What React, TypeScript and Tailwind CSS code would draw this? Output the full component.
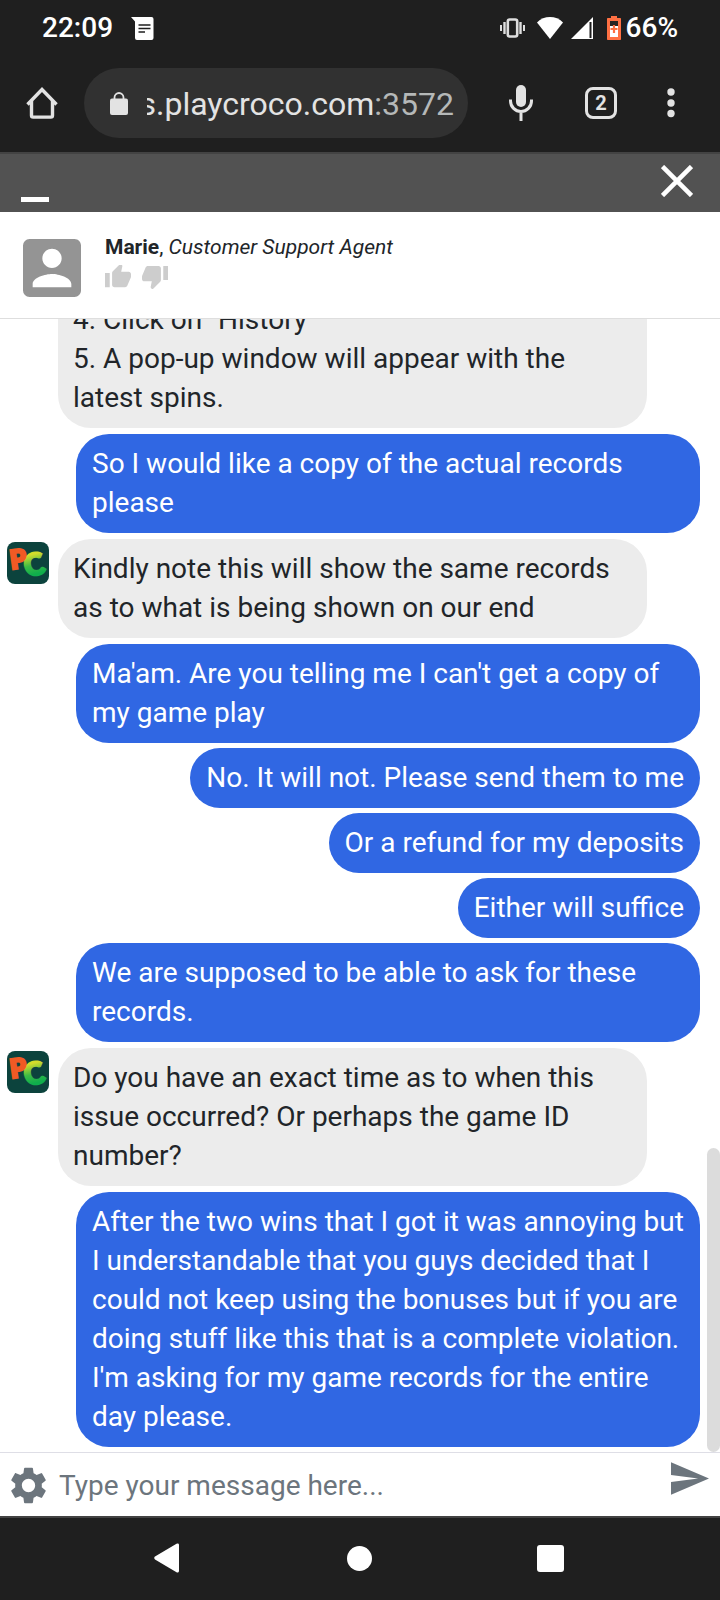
import { useState } from "react";
import clsx from "clsx";

interface Message { from: "agent" | "user"; text: string; avatar?: boolean; clipped?: boolean; }

const messages: Message[] = [
  { from: "agent", text: "4. Click on \"History\"\n5. A pop-up window will appear with the latest spins.", clipped: true },
  { from: "user", text: "So I would like a copy of the actual records please" },
  { from: "agent", text: "Kindly note this will show the same records as to what is being shown on our end", avatar: true },
  { from: "user", text: "Ma'am. Are you telling me I can't get a copy of my game play" },
  { from: "user", text: "No. It will not. Please send them to me" },
  { from: "user", text: "Or a refund for my deposits" },
  { from: "user", text: "Either will suffice" },
  { from: "user", text: "We are supposed to be able to ask for these records." },
  { from: "agent", text: "Do you have an exact time as to when this issue occurred? Or perhaps the game ID number?", avatar: true },
  { from: "user", text: "After the two wins that I got it was annoying but I understandable that you guys decided that I could not keep using the bonuses but if you are doing stuff like this that is a complete violation. I'm asking for my game records for the entire day please." },
];

function StatusBar() {
  return (
    <div className="flex h-14 items-center justify-between px-[42px] text-[28px] leading-8 font-medium text-white">
      <div className="flex items-center gap-[18px]">
        <span>22:09</span>
        <svg width="23" height="23" viewBox="0 0 23 23">
          <path d="M0 0h20.500a2 2 0 0 1 2 2v19a2 2 0 0 1-2 2H6a2 2 0 0 1-2-2V4.500z" fill="#fff" />
          <path d="M7.500 8h12M7.500 11.500h12M7.500 15h6.500" stroke="#1f1f1f" strokeWidth="1.600" />
        </svg>
      </div>
      <div className="flex items-center">
        <svg className="mr-3" width="25" height="20" viewBox="0 0 25 20" fill="none" stroke="#dedede">
          <rect x="7.800" y="1.500" width="9.400" height="17" rx="2" strokeWidth="2.600" />
          <path d="M1 7v6M24 7v6" strokeWidth="2" />
          <path d="M4.500 4v12M20.500 4v12" strokeWidth="2.400" />
        </svg>
        <svg className="mr-2" width="26" height="22" viewBox="0 0 26 22">
          <path d="M0 5.500C7-1.800 19-1.800 26 5.500L13 22z" fill="#fff" />
        </svg>
        <svg className="mr-[14px]" width="22" height="22" viewBox="0 0 22 22">
          <path d="M22 0v22H0z" fill="#fff" />
          <path d="M19.500 5v16" stroke="#1f1f1f" strokeWidth="2" />
        </svg>
        <svg className="mr-[5px]" width="14" height="24" viewBox="0 0 14 24">
          <path d="M4 0h6v2h3.200a.8.8 0 0 1 .8.8v20.400a.8.8 0 0 1-.8.800H.8a.8.8 0 0 1-.8-.8V2.800A.8.8 0 0 1 .8 2H4z" fill="#ff7043" />
          <path d="M3 5h8v5H3z" fill="#2a2422" />
          <path d="M3 10h8v11H3z" fill="#fff" />
          <path d="M7 9v8M3.500 13h7" stroke="#ff7043" strokeWidth="2.200" />
        </svg>
        <span>66%</span>
      </div>
    </div>
  );
}

function BrowserBar() {
  return (
    <div className="flex items-center pt-3 pr-[45px] pb-[14px] pl-[26px]">
      <button aria-label="Home" className="mr-[26px] shrink-0">
        <svg width="32" height="32" viewBox="0 0 32 32" fill="none" stroke="#e3e3e3" strokeWidth="3.400">
          <path d="M1.500 17.500 16 2.500l14.500 15" />
          <path d="M5.500 14v14.500a1.600 1.600 0 0 0 1.600 1.600h17.800a1.600 1.600 0 0 0 1.600-1.600V14" />
        </svg>
      </button>
      <button className="flex h-[70px] min-w-0 flex-1 items-center rounded-full bg-[#313131] pr-[14px] pl-[26px]">
        <svg className="mr-[19px] shrink-0" width="18" height="23" viewBox="0 0 18 23">
          <rect y="6.500" width="18" height="16.500" rx="2" fill="#e3e3e3" />
          <path d="M4.500 8V5.500a4.500 4.500 0 0 1 9 0V8" fill="none" stroke="#e3e3e3" strokeWidth="1.800" />
        </svg>
        <span className="flex min-w-0 flex-1 justify-end overflow-hidden pt-px text-[32px] leading-10 whitespace-nowrap text-[#e3e3e3]">
          s.playcroco.com<span className="text-[#b5b8b8]">:3572</span>
        </span>
      </button>
      <button aria-label="Voice search" className="ml-[41px] shrink-0">
        <svg width="24" height="36" viewBox="0 0 24 36">
          <rect x="7" width="10" height="22" rx="5" fill="#e3e3e3" />
          <path d="M1.500 14.500v1.500a10.500 10.500 0 0 0 21 0v-1.500M12 27v9" fill="none" stroke="#e3e3e3" strokeWidth="3" />
        </svg>
      </button>
      <button className="ml-[52px] flex size-8 shrink-0 items-center justify-center rounded-lg border-3 border-[#e3e3e3] text-xl leading-6 font-bold text-[#e3e3e3]">
        2
      </button>
      <button aria-label="More options" className="ml-[50px] shrink-0">
        <svg width="8" height="30" viewBox="0 0 8 30" fill="#e3e3e3">
          <circle cx="4" cy="4" r="3.700" />
          <circle cx="4" cy="15" r="3.700" />
          <circle cx="4" cy="25.500" r="3.700" />
        </svg>
      </button>
    </div>
  );
}

function ChatTitleBar() {
  return (
    <div className="flex h-15 items-center justify-between border-t-2 border-[#434343] bg-[#525252] pr-[27px] pb-1 pl-[21px]">
      <button aria-label="Minimize" className="flex h-[42px] items-end">
        <span className="h-[5px] w-7 bg-white" />
      </button>
      <button aria-label="Close">
        <svg width="32" height="32" viewBox="0 0 32 32" stroke="#fff" strokeWidth="4.600">
          <path d="M1.500 1.500l29 29M30.500 1.500l-29 29" />
        </svg>
      </button>
    </div>
  );
}

function AgentHeader() {
  return (
    <div className="flex items-start gap-6 border-b border-[#dedede] bg-white px-[23px] pt-[23px] pb-[21px]">
      <svg className="mt-1 shrink-0" width="58" height="58" viewBox="3 3 18 18" fill="#949494">
        <path d="M3 5v14a2 2 0 0 0 2 2h14c1.100 0 2-.9 2-2V5c0-1.100-.9-2-2-2H5a2 2 0 0 0-2 2zm12 4c0 1.660-1.340 3-3 3s-3-1.340-3-3 1.340-3 3-3 3 1.340 3 3zm-9 8c0-2 4-3.100 6-3.100s6 1.100 6 3.100v1H6v-1z" />
      </svg>
      <div>
        <p className="text-[21px] leading-6 text-[#212529]"><b>Marie</b>, <i>Customer Support Agent</i></p>
        <div className="mt-1.5 flex gap-[11px]">
          <button aria-label="Rate good">
            <svg width="26" height="24" viewBox="1 2.400 22 20" fill="#cdcdcd">
              <path d="M1 21h4V9H1v12zm22-11c0-1.100-.9-2-2-2h-6.310l.95-4.570.03-.32c0-.41-.17-.79-.44-1.060L14.170 1 7.590 7.590C7.220 7.950 7 8.450 7 9v10c0 1.100.9 2 2 2h9c.83 0 1.540-.5 1.840-1.220l3.020-7.050c.09-.23.14-.47.14-.73v-2z" />
            </svg>
          </button>
          <button aria-label="Rate bad">
            <svg width="26" height="24" viewBox="1 2.400 22 20" fill="#cdcdcd">
              <path d="M15 3H6c-.83 0-1.540.5-1.840 1.220l-3.020 7.050c-.09.23-.14.47-.14.73v2c0 1.100.9 2 2 2h6.310l-.95 4.570-.03.32c0 .41.17.79.44 1.060L9.830 23l6.590-6.590c.36-.36.58-.86.58-1.410V5c0-1.100-.9-2-2-2zm4 0v12h4V3h-4z" />
            </svg>
          </button>
        </div>
      </div>
    </div>
  );
}

function CrocoLogo() {
  return (
    <svg width="42" height="42" viewBox="0 0 42 42" role="img" aria-label="PC" fontFamily="Lato, sans-serif" fontWeight="900">
      <defs>
        <linearGradient id="croco" x1="0" y1="0" x2="0" y2="1">
          <stop offset="0.250" stopColor="#d3dc2c" />
          <stop offset="0.550" stopColor="#3dbb45" />
          <stop offset="0.800" stopColor="#0fae4c" />
        </linearGradient>
      </defs>
      <rect width="42" height="42" rx="8" fill="#0c433d" />
      <text x="17" y="33" fontSize="30" fill="url(#croco)" stroke="url(#croco)" strokeWidth="2.500" transform="rotate(-14 28 22)">C</text>
      <text x="3" y="26" fontSize="26" fill="#f15a24" stroke="#f15a24" strokeWidth="2.500" transform="rotate(-8 12 18)">P</text>
    </svg>
  );
}

function MessageRow({ message }: { message: Message }) {
  if (message.from === "user") {
    return (
      <li className="mt-[5px] flex justify-end pr-5 pl-[76px]">
        <p className="rounded-[33px] bg-[#3067e3] px-4 pt-[10px] pb-[11px] text-white">{message.text}</p>
      </li>
    );
  }
  return (
    <li className="mt-[6px] mb-[6px] flex items-start gap-[9px] pr-[73px] pl-[7px]">
      <div className="mt-[3px] w-[42px] shrink-0">{message.avatar && <CrocoLogo />}</div>
      <p
        className={clsx(
          "flex-1 bg-[#ececec] pt-[10px] pr-4 pb-[11px] pl-[15px] whitespace-pre-line text-[#212529]",
          message.clipped ? "rounded-b-[33px]" : "rounded-[33px]"
        )}
      >
        {message.text}
      </p>
    </li>
  );
}

function Composer() {
  const [draft, setDraft] = useState("");

  return (
    <form className="flex h-16 items-center border-t border-[#dedee6] bg-white pt-[2px] pr-[11px] pl-[10px]" onSubmit={(e) => e.preventDefault()}>
      <button type="button" aria-label="Settings" className="shrink-0">
        <svg width="37" height="37" viewBox="2 2 20 20" fill="#6c757d">
          <path d="M19.140 12.940c.04-.3.060-.61.060-.94 0-.32-.02-.64-.07-.94l2.030-1.580a.49.49 0 0 0 .12-.61l-1.920-3.320a.488.488 0 0 0-.59-.22l-2.390.96c-.5-.38-1.030-.7-1.620-.94l-.36-2.540a.484.484 0 0 0-.48-.41h-3.840c-.24 0-.43.17-.47.41l-.36 2.540c-.59.24-1.130.57-1.620.94l-2.390-.96c-.22-.08-.47 0-.59.22L2.740 8.870c-.12.21-.08.47.12.61l2.030 1.580c-.05.3-.09.63-.09.94s.02.64.07.94l-2.030 1.580a.49.49 0 0 0-.12.61l1.920 3.320c.12.22.37.29.59.22l2.390-.96c.5.38 1.030.7 1.620.94l.36 2.540c.05.24.24.41.48.41h3.840c.24 0 .44-.17.47-.41l.36-2.540c.59-.24 1.130-.56 1.620-.94l2.390.96c.22.08.47 0 .59-.22l1.920-3.320c.12-.22.070-.47-.12-.61l-2.010-1.580zM12 15.600A3.610 3.610 0 0 1 8.400 12c0-1.980 1.620-3.600 3.600-3.600s3.600 1.620 3.600 3.600-1.620 3.600-3.600 3.600z" />
        </svg>
      </button>
      <input
        aria-label="Message"
        className="mx-3 min-w-0 flex-1 text-[28px] leading-10 text-[#212529] outline-none placeholder:text-[#6c757d]"
        placeholder="Type your message here..."
        value={draft}
        onChange={(e) => setDraft(e.target.value)}
      />
      <button aria-label="Send" className="mb-[14px] shrink-0">
        <svg width="38" height="33" viewBox="2 3 21 18" fill="#6c757d">
          <path d="M2.010 21L23 12 2.010 3 2 10l15 2-15 2z" />
        </svg>
      </button>
    </form>
  );
}

function NavBar() {
  return (
    <nav className="flex h-21 items-center justify-between border-t-2 border-[#434343] bg-[#1f1f1f] pr-[156px] pb-[2px] pl-[154px]">
      <button aria-label="Back">
        <svg width="27" height="30" viewBox="0 0 27 30" fill="#fff">
          <path d="M1 13.600 22.500.8a1.500 1.500 0 0 1 2.500 1.200v26a1.500 1.500 0 0 1-2.500 1.200L1 16.400a1.700 1.700 0 0 1 0-2.800z" />
        </svg>
      </button>
      <button aria-label="Home screen" className="size-[25px] rounded-full bg-white" />
      <button aria-label="Recent apps" className="size-[27px] rounded-[3px] bg-white" />
    </nav>
  );
}

export default function App() {
  return (
    <div className="flex h-screen flex-col bg-white font-[Roboto,sans-serif]">
      <header className="bg-[#1f1f1f]">
        <StatusBar />
        <BrowserBar />
      </header>
      <ChatTitleBar />
      <AgentHeader />
      <main className="relative flex min-h-0 flex-1 flex-col justify-end overflow-hidden">
        <ul className="pb-[5px] text-[28px] leading-[39px]">
          {messages.map((message, index) => <MessageRow key={index} message={message} />)}
        </ul>
        {/* Scroll thumb */}
        <div className="absolute right-0 bottom-0 h-[304px] w-[13px] rounded-full bg-[#dcdcdc]" />
      </main>
      <Composer />
      <NavBar />
    </div>
  );
}
